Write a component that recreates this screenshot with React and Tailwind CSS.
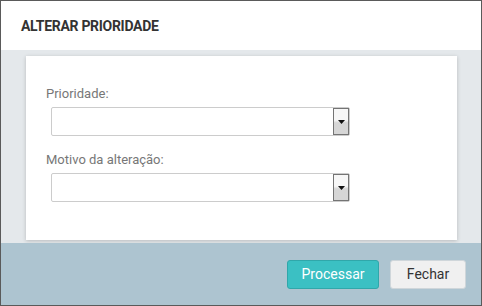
import React from 'react';

const SelectBox = () => (
  <div className="ml-[5px] w-[299px] h-[29px] border border-[#cccccc] rounded-[2px] bg-white flex justify-end items-stretch">
    <div className="w-[16px] border border-[#747474] bg-gradient-to-b from-[#f7f7f7] from-45% to-[#d6d6d6] to-55% flex items-center justify-center">
      <svg width="7" height="4" viewBox="0 0 7 4">
        <path d="M0 0h7L3.5 4z" fill="#111" />
      </svg>
    </div>
  </div>
);

const Field = ({ label, className }) => (
  <div className={className}>
    <div className="text-[13px] leading-[16px] text-[#777777]">{label}</div>
    <div className="mt-[5px]">
      <SelectBox />
    </div>
  </div>
);

export default function App() {
  return (
    <div
      className="w-[482px] h-[306px] border border-[#5a5a5a] flex flex-col bg-white"
      style={{ fontFamily: 'Roboto, "Liberation Sans", sans-serif' }}
    >
      <div className="h-[49px] flex items-center pl-[20px] pt-[1px]">
        <h1 className="text-[14px] font-bold text-[#333333] tracking-[-0.3px]">ALTERAR PRIORIDADE</h1>
      </div>
      <div className="flex-1 bg-[#e4e8eb] pl-[25px] pr-[24px] pt-[6px] pb-[3px]">
        <div className="bg-white h-[184px] shadow-[0_1px_4px_rgba(0,0,0,0.2)] pl-[20px] pt-[30px]">
          <Field label="Prioridade:" />
          <Field label="Motivo da alteração:" className="mt-[16px]" />
        </div>
      </div>
      <div className="h-[62px] bg-[#adc4d0] flex items-center justify-end gap-[11px] pr-[15px] pt-[1px]">
        <button className="w-[92px] h-[29px] rounded-[3px] bg-[#3bc0c3] border border-[#30a7aa] text-white text-[14px]">
          Processar
        </button>
        <button className="w-[76px] h-[29px] rounded-[3px] bg-[#f0f0f0] border border-[#cfd6da] text-[#333333] text-[14px]">
          Fechar
        </button>
      </div>
    </div>
  );
}
